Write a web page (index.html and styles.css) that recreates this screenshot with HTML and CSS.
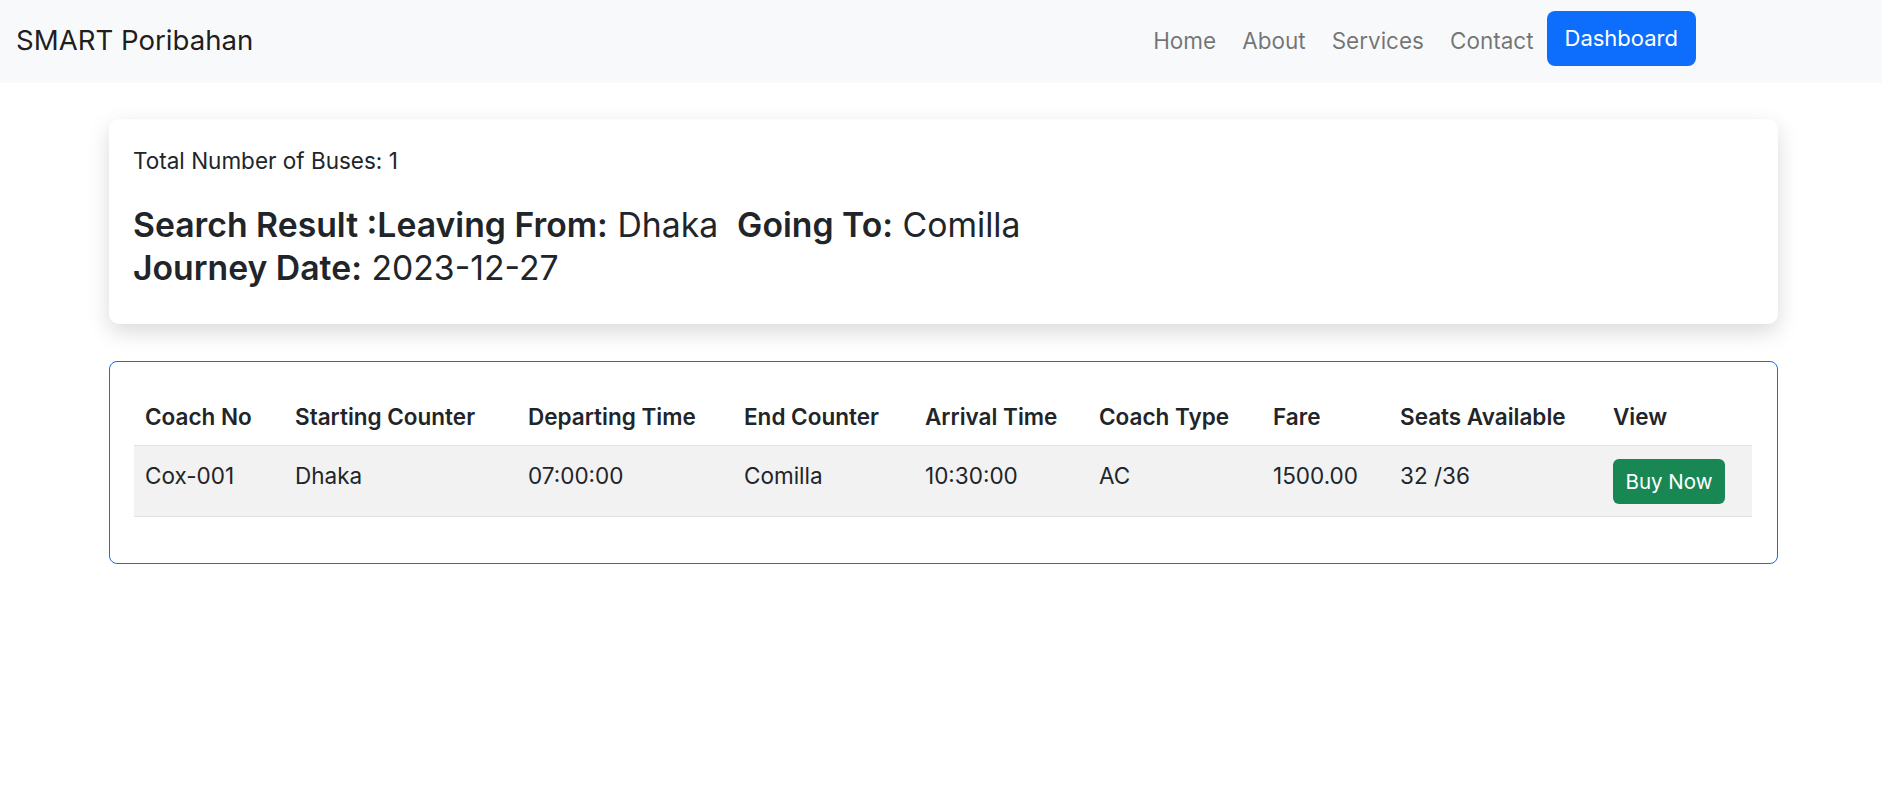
FILE: index.html
```html
<!DOCTYPE html>
<html lang="en">
<head>
<meta charset="utf-8">
<title>SMART Poribahan</title>
<link rel="stylesheet" href="styles.css">
</head>
<body>
<nav class="navbar">
  <a class="brand" href="#">SMART Poribahan</a>
  <ul class="nav">
    <li><a class="nav-link" href="#">Home</a></li>
    <li><a class="nav-link" href="#">About</a></li>
    <li><a class="nav-link" href="#">Services</a></li>
    <li><a class="nav-link" href="#">Contact</a></li>
    <li><a class="btn-dash" href="#">Dashboard</a></li>
  </ul>
</nav>
<main class="page">
  <section class="summary-card">
    <p class="total">Total Number of Buses: 1</p>
    <h4 class="search-title"><b>Search Result :Leaving From:</b> <span class="val">Dhaka</span>&nbsp; <b>Going To:</b> <span class="val">Comilla</span><br><b>Journey Date:</b> <span class="val">2023-12-27</span></h4>
  </section>
  <section class="result-card">
    <table class="bus-table">
      <colgroup>
        <col class="c1"><col class="c2"><col class="c3"><col class="c4"><col class="c5"><col class="c6"><col class="c7"><col class="c8"><col class="c9">
      </colgroup>
      <thead>
        <tr>
          <th>Coach No</th>
          <th>Starting Counter</th>
          <th>Departing Time</th>
          <th>End Counter</th>
          <th>Arrival Time</th>
          <th>Coach Type</th>
          <th>Fare</th>
          <th>Seats Available</th>
          <th>View</th>
        </tr>
      </thead>
      <tbody>
        <tr>
          <td>Cox-001</td>
          <td>Dhaka</td>
          <td>07:00:00</td>
          <td>Comilla</td>
          <td>10:30:00</td>
          <td>AC</td>
          <td>1500.00</td>
          <td>32 /36</td>
          <td><a class="btn-buy" href="#">Buy Now</a></td>
        </tr>
      </tbody>
    </table>
  </section>
</main>
</body>
</html>
```

FILE: styles.css
```css
* { box-sizing: border-box; }

html, body {
  margin: 0;
  padding: 0;
  background: #ffffff;
}

body {
  font-family: Inter, Roboto, "Liberation Sans", sans-serif;
  font-size: 22.5px;
  line-height: 1.5;
  color: #212529;
}

a { text-decoration: none; }

/* ---------- navbar ---------- */
.navbar {
  height: 83px;
  background: #f8f9fa;
  display: flex;
  align-items: center;
  padding: 0 186px 0 16px;
}

.brand {
  font-size: 27.6px;
  line-height: 42px;
  color: rgba(0, 0, 0, 0.9);
  margin-top: -3px;
}

.nav {
  list-style: none;
  margin: 0 0 0 auto;
  padding: 0;
  display: flex;
  align-items: center;
}

.nav-link {
  display: block;
  padding: 0 13px 2px;
  font-size: 22.5px;
  line-height: 34px;
  color: rgba(0, 0, 0, 0.55);
}

.btn-dash {
  display: block;
  margin-left: 0;
  margin-top: -6px;
  height: 55px;
  padding: 0 18px;
  line-height: 55px;
  font-size: 22px;
  color: #ffffff;
  background: #0d6efd;
  border-radius: 8px;
}

/* ---------- page ---------- */
.page {
  width: 1669px;
  margin: 36px 0 0 109px;
  display: flex;
  flex-direction: column;
  gap: 37px;
}

.summary-card {
  background: #ffffff;
  border-radius: 10px;
  box-shadow: 0 8px 22px rgba(0, 0, 0, 0.15);
  padding: 25px 24px 25px;
  height: 205px;
}

.total {
  margin: 0 0 25px;
  line-height: 34px;
}

.search-title {
  margin: 0;
  font-size: 33.75px;
  line-height: 43px;
  font-weight: 400;
}

.search-title b { font-weight: 600; }
.search-title .val { font-weight: 400; }

.result-card {
  border: 1px solid #0d6efd;
  border-radius: 8px;
  padding: 27px 25px 46px 24px;
}

/* ---------- table ---------- */
.bus-table {
  width: 100%;
  border-collapse: collapse;
  table-layout: fixed;
}

.c1 { width: 150px; }
.c2 { width: 233px; }
.c3 { width: 216px; }
.c4 { width: 181px; }
.c5 { width: 174px; }
.c6 { width: 174px; }
.c7 { width: 127px; }
.c8 { width: 213px; }
.c9 { width: 150px; }

.bus-table th,
.bus-table td {
  text-align: left;
  vertical-align: top;
  padding: 11px 11px;
  line-height: 34px;
  border-bottom: 1px solid #dee2e6;
  white-space: nowrap;
}

.bus-table th {
  font-weight: 600;
  color: #212529;
}

.bus-table tbody tr {
  background: #f2f2f2;
}

.bus-table td {
  padding: 12.5px 11px;
  font-weight: 400;
}

.btn-buy {
  display: inline-block;
  height: 45px;
  padding: 0 12.5px;
  line-height: 45px;
  font-size: 20.5px;
  color: #ffffff;
  background: #198754;
  border-radius: 6px;
}
```
